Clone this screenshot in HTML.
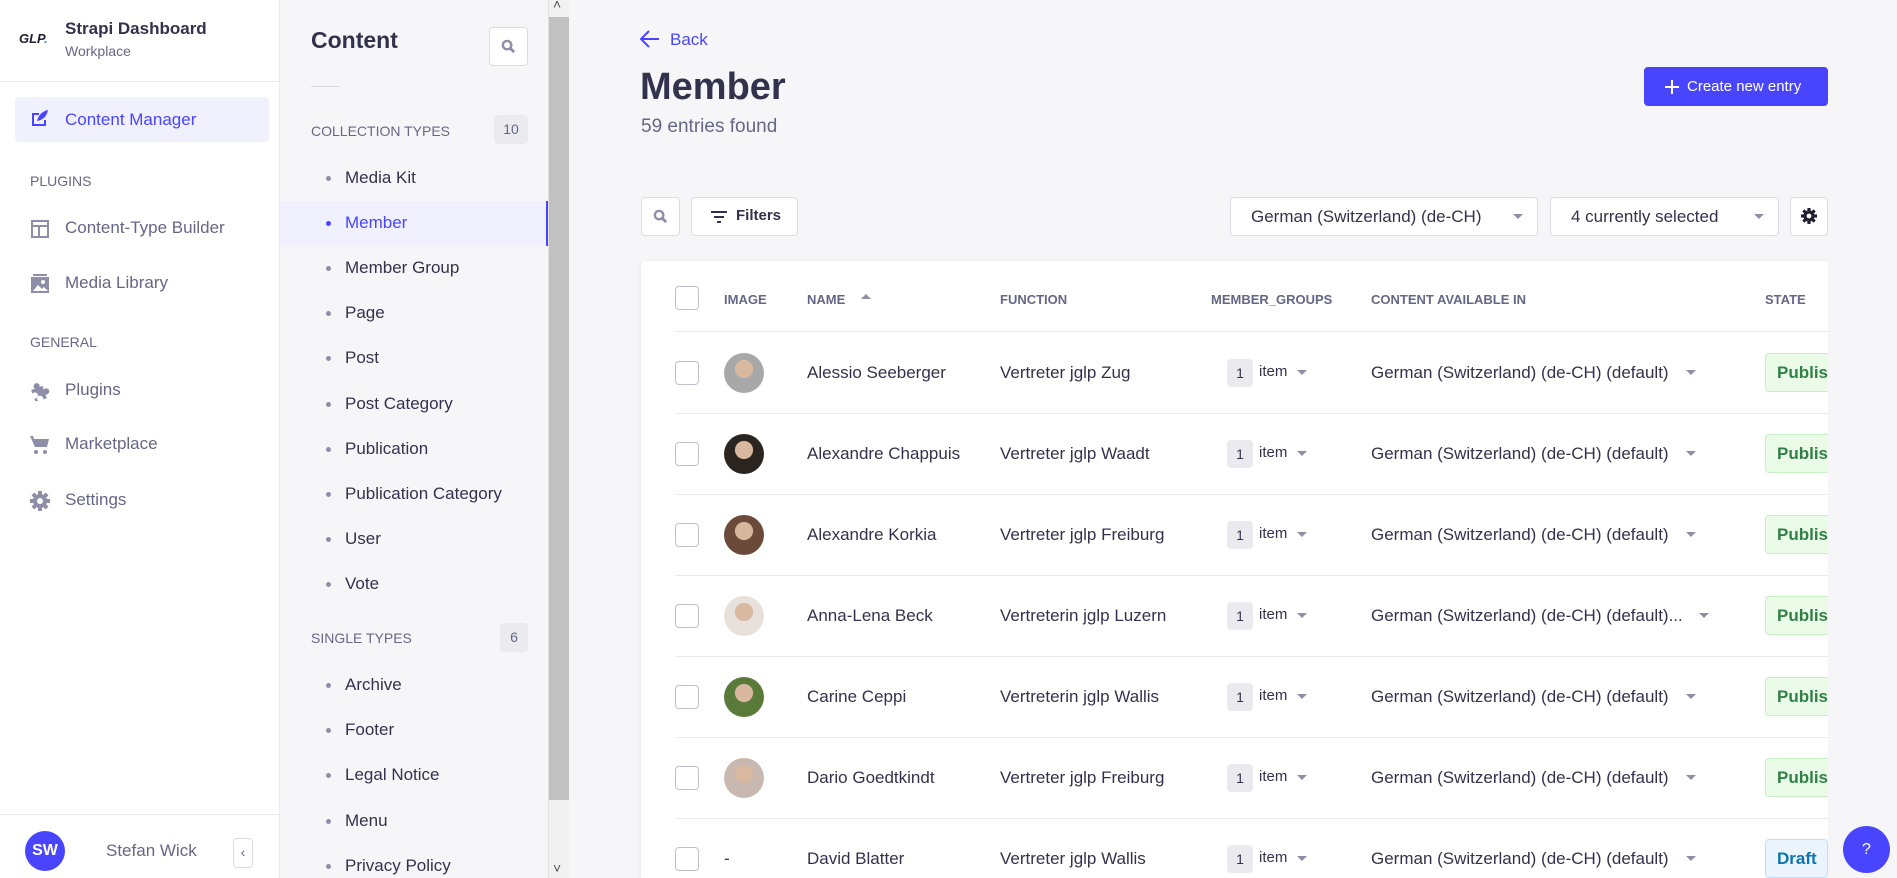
<!DOCTYPE html>
<html><head><meta charset="utf-8"><style>
*{box-sizing:border-box;margin:0;padding:0}
html{width:1897px;height:878px;overflow:hidden}
body{width:1897px;height:878px;overflow:hidden;position:relative;background:#f6f6f9;font-family:"Liberation Sans",sans-serif;color:#32324d}
.a{position:absolute;white-space:nowrap}
.nav{font-size:17px;color:#666687}
.ic{position:absolute;width:20px;height:20px}
.cat{font-size:15px;color:#666687}
.li{font-size:17px;color:#32324d}
.dot{position:absolute;width:5px;height:5px;border-radius:50%;background:#8e8ea9}
.btn{position:absolute;background:#fff;border:1px solid #dcdce4;border-radius:4px}
.th{font-size:13px;color:#666687;font-weight:bold;top:292px}
.td{font-size:17px;color:#32324d}
.cb{position:absolute;left:675px;width:24px;height:24px;border:1px solid #c0c0cf;border-radius:4px;background:#fff}
.row{position:absolute;left:675px;width:1153px;height:1px;background:#eaeaef}
.av{position:absolute;left:724px;width:40px;height:40px;border-radius:50%;overflow:hidden}
.bad{position:absolute;left:1227px;width:26px;height:28px;background:#eaeaef;border-radius:4px;font-size:14px;text-align:center;line-height:28px}
.car{position:absolute;width:0;height:0;border-left:5px solid transparent;border-right:5px solid transparent;border-top:5px solid #8e8ea9}
.pub{position:absolute;left:1765px;width:70px;height:39px;background:#eafbe7;border:1px solid #c6f0c2;border-radius:4px;color:#328048;font-weight:bold;font-size:17px;line-height:37px;padding-left:11px;overflow:hidden}
</style></head><body>
<!-- left sidebar -->
<div class="a" style="left:0;top:0;width:280px;height:878px;background:#fff;border-right:1px solid #eaeaef"></div>
<div class="a" style="left:19px;top:31px;font-size:13px;font-weight:bold;font-style:italic;color:#212134">GLP<span style="color:#3a8ee6">.</span></div>
<div class="a" style="left:65px;top:19px;font-size:17px;font-weight:bold;color:#32324d">Strapi Dashboard</div>
<div class="a" style="left:65px;top:43px;font-size:14px;color:#666687">Workplace</div>
<div class="a" style="left:0;top:81px;width:280px;height:1px;background:#eaeaef"></div>
<div class="a" style="left:15px;top:97px;width:254px;height:45px;background:#f0f0ff;border-radius:4px"></div>
<svg class="ic" style="left:30px;top:108px" viewBox="0 0 20 20"><path d="M2 5h7v2H4v9h10v-4h2v6H2z" fill="#4945ff"/><path d="M7 13c1-5 5-10 11-11-1 6-5 10-11 11z" fill="#4945ff"/></svg>
<div class="a" style="left:65px;top:110px;font-size:17px;color:#4945ff">Content Manager</div>
<div class="a cat" style="left:30px;top:173px;font-size:14px">PLUGINS</div>
<svg class="ic" style="left:30px;top:219px" viewBox="0 0 20 20"><path d="M1 1h18v18H1zM3 3v3h14V3zM3 8v9h5V8zM10 8v9h7V8z" fill="#8e8ea9" fill-rule="evenodd"/></svg>
<div class="a nav" style="left:65px;top:218px">Content-Type Builder</div>
<svg class="ic" style="left:30px;top:274px" viewBox="0 0 20 20"><rect x="3" y="0" width="14" height="2" fill="#8e8ea9"/><path d="M1 3h18v16H1z" fill="#8e8ea9"/><circle cx="13" cy="8" r="2" fill="#fff"/><path d="M3 17l5-6 4 4 2-2 4 4z" fill="#fff"/></svg>
<div class="a nav" style="left:65px;top:273px">Media Library</div>
<div class="a cat" style="left:30px;top:334px;font-size:14px">GENERAL</div>
<svg class="ic" style="left:30px;top:381px" viewBox="0 0 20 20"><path d="M2 6h4a3 3 0 1 1 5 0h3v4a3 3 0 1 1 0 5v4h-4a3 3 0 1 0-5 0H2v-4a3 3 0 1 0 0-5z" fill="#8e8ea9" transform="rotate(-20 10 10)"/></svg>
<div class="a nav" style="left:65px;top:380px">Plugins</div>
<svg class="ic" style="left:30px;top:435px" viewBox="0 0 20 20"><path d="M0 1h3l1 3h15l-2 8H5z" fill="#8e8ea9"/><circle cx="6" cy="17" r="2" fill="#8e8ea9"/><circle cx="15" cy="17" r="2" fill="#8e8ea9"/></svg>
<div class="a nav" style="left:65px;top:434px">Marketplace</div>
<svg class="ic" style="left:30px;top:491px" viewBox="0 0 20 20"><circle cx="10" cy="10" r="7" fill="#8e8ea9"/><g fill="#8e8ea9"><rect x="8" y="0" width="4" height="20"/><rect x="0" y="8" width="20" height="4"/><rect x="8" y="0" width="4" height="20" transform="rotate(45 10 10)"/><rect x="8" y="0" width="4" height="20" transform="rotate(-45 10 10)"/></g><circle cx="10" cy="10" r="3" fill="#fff"/></svg>
<div class="a nav" style="left:65px;top:490px">Settings</div>
<div class="a" style="left:0;top:814px;width:280px;height:1px;background:#eaeaef"></div>
<div class="a" style="left:25px;top:831px;width:40px;height:40px;border-radius:50%;background:#4945ff;color:#fff;font-weight:bold;font-size:16px;text-align:center;line-height:40px">SW</div>
<div class="a" style="left:106px;top:841px;font-size:17px;color:#666687">Stefan Wick</div>
<div class="a" style="left:233px;top:838px;width:20px;height:30px;border:1px solid #dcdce4;border-radius:4px;background:#fff;color:#666687;font-size:14px;text-align:center;line-height:27px">‹</div>

<!-- second panel -->
<div class="a" style="left:280px;top:0;width:268px;height:878px;background:#f6f6f9"></div>
<div class="a" style="left:311px;top:27px;font-size:23px;font-weight:bold;color:#32324d">Content</div>
<div class="btn" style="left:489px;top:27px;width:39px;height:39px"></div>
<svg class="a" style="left:501px;top:39px" width="15" height="15" viewBox="0 0 16 16"><circle cx="6.5" cy="6.5" r="4.5" stroke="#8e8ea9" stroke-width="2.5" fill="none"/><path d="M10 10l4 4" stroke="#8e8ea9" stroke-width="3"/></svg>
<div class="a" style="left:311px;top:86px;width:29px;height:1px;background:#dcdce4"></div>
<div class="a cat" style="left:311px;top:123px;font-size:14px">COLLECTION TYPES</div>
<div class="a" style="left:494px;top:115px;width:34px;height:29px;background:#eaeaef;border-radius:4px;font-size:14px;color:#666687;text-align:center;line-height:29px">10</div>
<div class="a" style="left:280px;top:201px;width:268px;height:45px;background:#f0f0ff;border-right:2px solid #4945ff"></div>
<div id="l1"></div>
<div class="a cat" style="left:311px;top:630px;font-size:14px">SINGLE TYPES</div>
<div class="a" style="left:500px;top:623px;width:28px;height:29px;background:#eaeaef;border-radius:4px;font-size:14px;color:#666687;text-align:center;line-height:29px">6</div>
<!-- scrollbar -->
<div class="a" style="left:548px;top:0;width:21px;height:878px;background:#f1f1f1;border-left:1px solid #e0e0e0"></div>
<div class="a" style="left:549px;top:17px;width:20px;height:783px;background:#c1c1c1"></div>
<div class="a" style="left:553px;top:-4px;font-size:14px;color:#505050">˄</div>
<div class="a" style="left:553px;top:860px;font-size:14px;color:#505050">˅</div>

<!-- main -->
<svg class="a" style="left:640px;top:30px" width="20" height="18" viewBox="0 0 20 18"><path d="M19 9H2M9 1L1 9l8 8" stroke="#4945ff" stroke-width="2" fill="none"/></svg>
<div class="a" style="left:670px;top:30px;font-size:17px;color:#4945ff">Back</div>
<div class="a" style="left:640px;top:66px;font-size:38px;font-weight:bold;color:#32324d">Member</div>
<div class="a" style="left:641px;top:116px;font-size:19px;color:#666687">59 entries found</div>
<div class="a" style="left:1644px;top:67px;width:184px;height:39px;background:#4945ff;border-radius:4px;color:#fff;font-size:15px;line-height:39px;padding-left:43px">Create new entry</div>
<div class="a" style="left:1665px;top:86px;width:14px;height:2px;background:#fff"></div>
<div class="a" style="left:1671px;top:80px;width:2px;height:14px;background:#fff"></div>

<div class="btn" style="left:641px;top:197px;width:39px;height:39px"></div>
<svg class="a" style="left:653px;top:209px" width="15" height="15" viewBox="0 0 16 16"><circle cx="6.5" cy="6.5" r="4.5" stroke="#8e8ea9" stroke-width="2.5" fill="none"/><path d="M10 10l4 4" stroke="#8e8ea9" stroke-width="3"/></svg>
<div class="btn" style="left:691px;top:197px;width:107px;height:39px"></div>
<svg class="a" style="left:711px;top:210px" width="16" height="14" viewBox="0 0 16 14"><path d="M0 2h16M3 7h10M6 12h4" stroke="#32324d" stroke-width="2"/></svg>
<div class="a" style="left:736px;top:207px;font-size:15px;font-weight:bold;color:#32324d">Filters</div>
<div class="btn" style="left:1230px;top:197px;width:308px;height:39px"></div>
<div class="a" style="left:1251px;top:207px;font-size:17px">German (Switzerland) (de-CH)</div>
<div class="car" style="left:1513px;top:214px"></div>
<div class="btn" style="left:1550px;top:197px;width:229px;height:39px"></div>
<div class="a" style="left:1571px;top:207px;font-size:17px">4 currently selected</div>
<div class="car" style="left:1754px;top:214px"></div>
<div class="btn" style="left:1790px;top:197px;width:38px;height:39px"></div>
<svg class="a" style="left:1801px;top:208px" width="16" height="16" viewBox="0 0 20 20"><circle cx="10" cy="10" r="7" fill="#212134"/><g fill="#212134"><rect x="8" y="0" width="4" height="20"/><rect x="0" y="8" width="20" height="4"/><rect x="8" y="0" width="4" height="20" transform="rotate(45 10 10)"/><rect x="8" y="0" width="4" height="20" transform="rotate(-45 10 10)"/></g><circle cx="10" cy="10" r="3" fill="#fff"/></svg>

<div class="a" style="left:641px;top:261px;width:1187px;height:617px;background:#fff;border-radius:4px 4px 0 0;box-shadow:0 1px 4px rgba(33,33,52,.1)"></div>
<div class="cb" style="top:286px"></div>
<div class="a th" style="left:724px">IMAGE</div>
<div class="a th" style="left:807px">NAME</div>
<div class="a" style="left:861px;top:294px;width:0;height:0;border-left:5px solid transparent;border-right:5px solid transparent;border-bottom:5px solid #8e8ea9"></div>
<div class="a th" style="left:1000px">FUNCTION</div>
<div class="a th" style="left:1211px">MEMBER_GROUPS</div>
<div class="a th" style="left:1371px">CONTENT AVAILABLE IN</div>
<div class="a th" style="left:1765px">STATE</div>
<div class="row" style="top:331px"></div>
<div id="rows"></div>

<script>
var items=["Media Kit","Member","Member Group","Page","Post","Post Category","Publication","Publication Category","User","Vote"];
var h="";
items.forEach(function(t,i){var y=178+i*45.1;var act=i==1;
h+='<div class="dot" style="left:326px;top:'+(y-2)+'px;'+(act?'background:#4945ff':'')+'"></div><div class="a li" style="left:345px;top:'+(y-10)+'px;'+(act?'color:#4945ff':'')+'">'+t+'</div>';});
["Archive","Footer","Legal Notice","Menu","Privacy Policy"].forEach(function(t,i){var y=685+i*45.2;
h+='<div class="dot" style="left:326px;top:'+(y-2)+'px"></div><div class="a li" style="left:345px;top:'+(y-10)+'px">'+t+'</div>';});
document.getElementById("l1").outerHTML=h;
var rows=[["Alessio Seeberger","Vertreter jglp Zug","German (Switzerland) (de-CH) (default)","#a8a8a8"],
["Alexandre Chappuis","Vertreter jglp Waadt","German (Switzerland) (de-CH) (default)","#2a2520"],
["Alexandre Korkia","Vertreter jglp Freiburg","German (Switzerland) (de-CH) (default)","#6b4a3a"],
["Anna-Lena Beck","Vertreterin jglp Luzern","German (Switzerland) (de-CH) (default)...","#e8e0da"],
["Carine Ceppi","Vertreterin jglp Wallis","German (Switzerland) (de-CH) (default)","#5a7a3a"],
["Dario Goedtkindt","Vertreter jglp Freiburg","German (Switzerland) (de-CH) (default)","#c8b8b0"],
["David Blatter","Vertreter jglp Wallis","German (Switzerland) (de-CH) (default)",null]];
var r="";
rows.forEach(function(d,i){var c=373+i*81;
if(i>0)r+='<div class="row" style="top:'+(c-41)+'px"></div>';
r+='<div class="cb" style="top:'+(c-12)+'px"></div>';
if(d[3])r+='<div class="av" style="top:'+(c-20)+'px;background:radial-gradient(circle at 50% 40%,#d9b8a0 0 28%,'+d[3]+' 30%)"></div>';
else r+='<div class="a td" style="left:724px;top:'+(c-10)+'px">-</div>';
r+='<div class="a td" style="left:807px;top:'+(c-10)+'px">'+d[0]+'</div>';
r+='<div class="a td" style="left:1000px;top:'+(c-10)+'px">'+d[1]+'</div>';
r+='<div class="bad" style="top:'+(c-14)+'px">1</div><div class="a td" style="left:1259px;top:'+(c-10)+'px;font-size:15px">item</div><div class="car" style="left:1297px;top:'+(c-3)+'px"></div>';
r+='<div class="a td" style="left:1371px;top:'+(c-10)+'px">'+d[2]+'</div>';
var cx=d[2].length>40?1699:1686;
r+='<div class="car" style="left:'+cx+'px;top:'+(c-3)+'px"></div>';
if(i<6)r+='<div class="pub" style="top:'+(c-20)+'px">Publish</div>';
else r+='<div class="pub" style="top:'+(c-20)+'px;background:#eaf5ff;border-color:#b8e1ff;color:#0c75af;width:63px">Draft</div>';
});
document.getElementById("rows").outerHTML=r;
</script>
<div class="a" style="left:1828px;top:261px;width:69px;height:617px;background:#f6f6f9"></div>
<div class="a" style="left:1843px;top:826px;width:47px;height:47px;border-radius:50%;background:#4945ff;color:#fff;text-align:center;line-height:47px;font-size:16px">?</div>
</body></html>
